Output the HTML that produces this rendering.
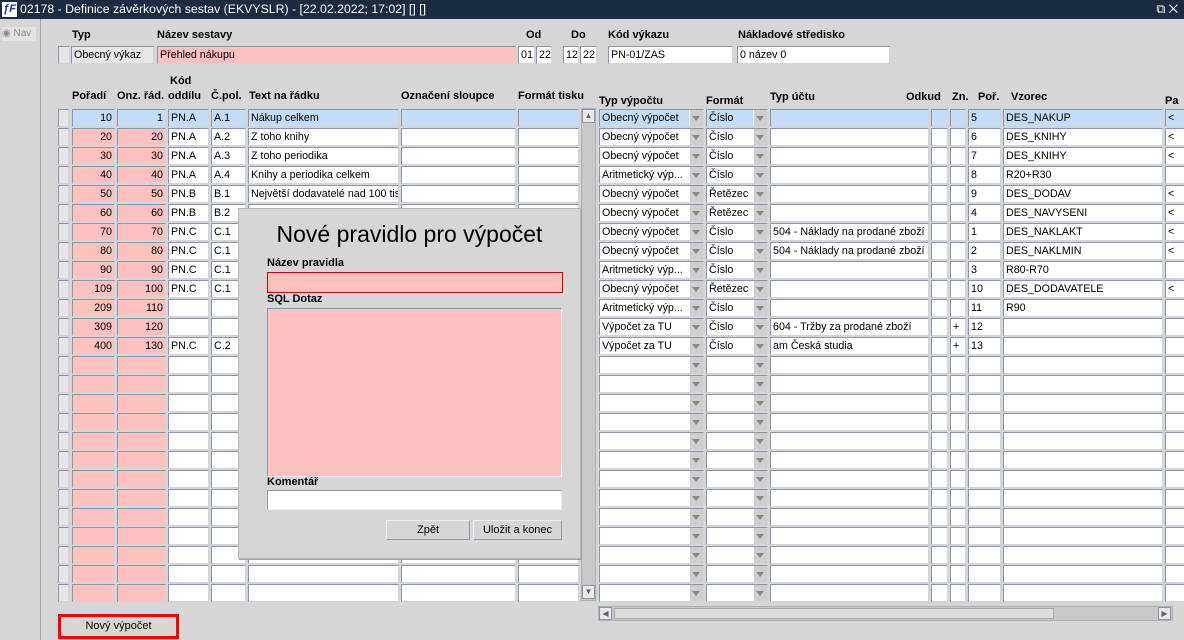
<!DOCTYPE html><html><head><meta charset="utf-8"><style>
*{box-sizing:border-box;margin:0;padding:0}
body{width:1184px;height:640px;background:#d6d6d6;font-family:"Liberation Sans",Arial,sans-serif;font-size:11px;color:#000;position:relative;overflow:hidden}
.t{position:absolute;left:0;top:0;width:1184px;height:19px;background:#1c2b44;color:#fff;font-size:12.3px;line-height:19px;padding-left:20px;white-space:nowrap}
.lg{position:absolute;left:2px;top:2px;width:15px;height:15px;background:#fff;color:#2030c0;font-weight:bold;font-style:italic;font-size:11px;line-height:15px;text-align:center}
.side{position:absolute;left:0;top:19px;width:41px;height:621px;border-right:1px solid #a8a8a8}
.a{position:absolute}
.h{position:absolute;font-weight:bold;font-size:11px;white-space:nowrap}
.c{position:absolute;height:18px;background:#fff;border:1px solid #8a96aa;border-right-color:#d0d4dc;border-bottom-color:#d0d4dc;line-height:17px;padding:0 2px;white-space:nowrap;overflow:hidden;font-size:10.7px}
.r{text-align:right}
.pk{background:#ffc0c0}
.bl{background:#c2ddf8}
.gy{background:#e6e6e6}
.dd::after{content:"";position:absolute;right:0;top:0;width:13px;height:16px;background:#cfcfcf;border-left:1px solid #fff}
.dd::before{content:"";position:absolute;right:3px;top:6px;border:4px solid transparent;border-top:5px solid #888;border-bottom:0;z-index:2}
.row{position:absolute;left:0;width:1184px;height:18px}
.m{left:58px;width:11px}.A{left:72px;width:43px}.B{left:117px;width:49px}.C{left:168px;width:41px}.D{left:211px;width:35px}.E{left:248px;width:151px}.F{left:401px;width:115px}.G{left:518px;width:61px}
.H{left:599px;width:105px}.I{left:706px;width:62px}.J{left:770px;width:159px}.K{left:931px;width:17px}.L{left:950px;width:16px}.N{left:968px;width:33px}.O{left:1003px;width:160px}.P{left:1165px;width:20px}
.dlg{position:absolute;left:238px;top:208px;width:343px;height:351px;background:#d6d6d6;border:1px solid #b8b8b8;box-shadow:1px 1px 0 #a0a0a0;z-index:5}
.btn{position:absolute;background:#d6d6d6;border:1px solid #8a96aa;border-top-color:#eee;border-left-color:#eee;text-align:center;line-height:18px;font-size:11px;white-space:nowrap}
</style></head><body>
<div class="t"><div class="lg">ƒF</div>02178 - Definice závěrkových sestav (EKVYSLR) - [22.02.2022; 17:02] [] []<span style="position:absolute;right:6px;top:0">⧉ ✕</span></div>
<div class="side"><div class="a" style="left:2px;top:8px;width:34px;height:14px;background:#e4e4e4;color:#8a8a8a;font-size:10px;line-height:14px;white-space:nowrap">◉ Nav</div></div>

<div class="h" style="left:72px;top:29px">Typ</div>
<div class="h" style="left:157px;top:29px">Název sestavy</div>
<div class="h" style="left:526px;top:29px">Od</div>
<div class="h" style="left:571px;top:29px">Do</div>
<div class="h" style="left:608px;top:29px">Kód výkazu</div>
<div class="h" style="left:738px;top:29px">Nákladové středisko</div>
<div class="c gy" style="left:58px;top:46px;width:12px"></div>
<div class="c gy" style="left:71px;top:46px;width:83px">Obecný výkaz</div>
<div class="c pk" style="left:157px;top:46px;width:359px">Přehled nákupu</div>
<div class="c" style="left:518px;top:46px;width:17px">01</div>
<div class="c" style="left:536px;top:46px;width:16px">22</div>
<div class="c" style="left:563px;top:46px;width:16px">12</div>
<div class="c" style="left:580px;top:46px;width:17px">22</div>
<div class="c" style="left:608px;top:46px;width:125px">PN-01/ZAS</div>
<div class="c" style="left:737px;top:46px;width:153px">0 název 0</div>

<div class="h" style="left:170px;top:75px">Kód</div>
<div class="h" style="left:72px;top:90px">Pořadí</div>
<div class="h" style="left:117px;top:90px">Onz. řád.</div>
<div class="h" style="left:168px;top:90px">oddílu</div>
<div class="h" style="left:211px;top:90px">Č.pol.</div>
<div class="h" style="left:249px;top:90px">Text na řádku</div>
<div class="h" style="left:401px;top:90px">Označení sloupce</div>
<div class="h" style="left:518px;top:90px">Formát tisku</div>
<div class="h" style="left:599px;top:95px">Typ výpočtu</div>
<div class="h" style="left:706px;top:95px">Formát</div>
<div class="h" style="left:770px;top:91px">Typ účtu</div>
<div class="h" style="left:906px;top:91px">Odkud</div>
<div class="h" style="left:952px;top:91px">Zn.</div>
<div class="h" style="left:978px;top:91px">Poř.</div>
<div class="h" style="left:1011px;top:91px">Vzorec</div>
<div class="h" style="left:1165px;top:95px">Pa</div>

<div class="a" style="left:581px;top:108px;width:15px;height:493px;background:#c8c8c8;border:1px solid #b0b0b0"></div>
<div class="a" style="left:582px;top:109px;width:13px;height:14px;background:#e8e8e8;border:1px solid #8a96aa;font-size:8px;text-align:center;line-height:12px;color:#666">▲</div>
<div class="a" style="left:582px;top:585px;width:13px;height:14px;background:#e8e8e8;border:1px solid #8a96aa;font-size:8px;text-align:center;line-height:12px;color:#666">▼</div>

<div id="rows">
<div class="row" style="top:109px"><div class="c m gy"></div><div class="c A r bl">10</div><div class="c B r bl">1</div><div class="c C bl">PN.A</div><div class="c D bl">A.1</div><div class="c E bl">Nákup celkem</div><div class="c F bl"></div><div class="c G bl"></div><div class="c H dd bl">Obecný výpočet</div><div class="c I dd bl">Číslo</div><div class="c J bl"></div><div class="c K bl"></div><div class="c L bl"></div><div class="c N bl">5</div><div class="c O bl">DES_NAKUP</div><div class="c P bl">&lt;</div></div>
<div class="row" style="top:128px"><div class="c m gy"></div><div class="c A r pk">20</div><div class="c B r pk">20</div><div class="c C">PN.A</div><div class="c D">A.2</div><div class="c E">Z toho knihy</div><div class="c F"></div><div class="c G"></div><div class="c H dd">Obecný výpočet</div><div class="c I dd">Číslo</div><div class="c J"></div><div class="c K"></div><div class="c L"></div><div class="c N">6</div><div class="c O">DES_KNIHY</div><div class="c P">&lt;</div></div>
<div class="row" style="top:147px"><div class="c m gy"></div><div class="c A r pk">30</div><div class="c B r pk">30</div><div class="c C">PN.A</div><div class="c D">A.3</div><div class="c E">Z toho periodika</div><div class="c F"></div><div class="c G"></div><div class="c H dd">Obecný výpočet</div><div class="c I dd">Číslo</div><div class="c J"></div><div class="c K"></div><div class="c L"></div><div class="c N">7</div><div class="c O">DES_KNIHY</div><div class="c P">&lt;</div></div>
<div class="row" style="top:166px"><div class="c m gy"></div><div class="c A r pk">40</div><div class="c B r pk">40</div><div class="c C">PN.A</div><div class="c D">A.4</div><div class="c E">Knihy a periodika celkem</div><div class="c F"></div><div class="c G"></div><div class="c H dd">Aritmetický výp...</div><div class="c I dd">Číslo</div><div class="c J"></div><div class="c K"></div><div class="c L"></div><div class="c N">8</div><div class="c O">R20+R30</div><div class="c P"></div></div>
<div class="row" style="top:185px"><div class="c m gy"></div><div class="c A r pk">50</div><div class="c B r pk">50</div><div class="c C">PN.B</div><div class="c D">B.1</div><div class="c E">Největší dodavatelé nad 100 tis</div><div class="c F"></div><div class="c G"></div><div class="c H dd">Obecný výpočet</div><div class="c I dd">Řetězec</div><div class="c J"></div><div class="c K"></div><div class="c L"></div><div class="c N">9</div><div class="c O">DES_DODAV</div><div class="c P">&lt;</div></div>
<div class="row" style="top:204px"><div class="c m gy"></div><div class="c A r pk">60</div><div class="c B r pk">60</div><div class="c C">PN.B</div><div class="c D">B.2</div><div class="c E"></div><div class="c F"></div><div class="c G"></div><div class="c H dd">Obecný výpočet</div><div class="c I dd">Řetězec</div><div class="c J"></div><div class="c K"></div><div class="c L"></div><div class="c N">4</div><div class="c O">DES_NAVYSENI</div><div class="c P">&lt;</div></div>
<div class="row" style="top:223px"><div class="c m gy"></div><div class="c A r pk">70</div><div class="c B r pk">70</div><div class="c C">PN.C</div><div class="c D">C.1</div><div class="c E"></div><div class="c F"></div><div class="c G"></div><div class="c H dd">Obecný výpočet</div><div class="c I dd">Číslo</div><div class="c J">504 - Náklady na prodané zboží</div><div class="c K"></div><div class="c L"></div><div class="c N">1</div><div class="c O">DES_NAKLAKT</div><div class="c P">&lt;</div></div>
<div class="row" style="top:242px"><div class="c m gy"></div><div class="c A r pk">80</div><div class="c B r pk">80</div><div class="c C">PN.C</div><div class="c D">C.1</div><div class="c E"></div><div class="c F"></div><div class="c G"></div><div class="c H dd">Obecný výpočet</div><div class="c I dd">Číslo</div><div class="c J">504 - Náklady na prodané zboží</div><div class="c K"></div><div class="c L"></div><div class="c N">2</div><div class="c O">DES_NAKLMIN</div><div class="c P">&lt;</div></div>
<div class="row" style="top:261px"><div class="c m gy"></div><div class="c A r pk">90</div><div class="c B r pk">90</div><div class="c C">PN.C</div><div class="c D">C.1</div><div class="c E"></div><div class="c F"></div><div class="c G"></div><div class="c H dd">Aritmetický výp...</div><div class="c I dd">Číslo</div><div class="c J"></div><div class="c K"></div><div class="c L"></div><div class="c N">3</div><div class="c O">R80-R70</div><div class="c P"></div></div>
<div class="row" style="top:280px"><div class="c m gy"></div><div class="c A r pk">109</div><div class="c B r pk">100</div><div class="c C">PN.C</div><div class="c D">C.1</div><div class="c E"></div><div class="c F"></div><div class="c G"></div><div class="c H dd">Obecný výpočet</div><div class="c I dd">Řetězec</div><div class="c J"></div><div class="c K"></div><div class="c L"></div><div class="c N">10</div><div class="c O">DES_DODAVATELE</div><div class="c P">&lt;</div></div>
<div class="row" style="top:299px"><div class="c m gy"></div><div class="c A r pk">209</div><div class="c B r pk">110</div><div class="c C"></div><div class="c D"></div><div class="c E"></div><div class="c F"></div><div class="c G"></div><div class="c H dd">Aritmetický výp...</div><div class="c I dd">Číslo</div><div class="c J"></div><div class="c K"></div><div class="c L"></div><div class="c N">11</div><div class="c O">R90</div><div class="c P"></div></div>
<div class="row" style="top:318px"><div class="c m gy"></div><div class="c A r pk">309</div><div class="c B r pk">120</div><div class="c C"></div><div class="c D"></div><div class="c E"></div><div class="c F"></div><div class="c G"></div><div class="c H dd">Výpočet za TU</div><div class="c I dd">Číslo</div><div class="c J">604 - Tržby za prodané zboží</div><div class="c K"></div><div class="c L">+</div><div class="c N">12</div><div class="c O"></div><div class="c P"></div></div>
<div class="row" style="top:337px"><div class="c m gy"></div><div class="c A r pk">400</div><div class="c B r pk">130</div><div class="c C">PN.C</div><div class="c D">C.2</div><div class="c E"></div><div class="c F"></div><div class="c G"></div><div class="c H dd">Výpočet za TU</div><div class="c I dd">Číslo</div><div class="c J">am Česká studia</div><div class="c K"></div><div class="c L">+</div><div class="c N">13</div><div class="c O"></div><div class="c P"></div></div>
</div>
<script>
var r=document.getElementById('rows');
for(var i=13;i<26;i++){var d=document.createElement('div');d.className='row';d.style.top=(109+19*i)+'px';
d.innerHTML='<div class="c m gy"></div><div class="c A pk"></div><div class="c B pk"></div><div class="c C"></div><div class="c D"></div><div class="c E"></div><div class="c F"></div><div class="c G"></div><div class="c H dd"></div><div class="c I dd"></div><div class="c J"></div><div class="c K"></div><div class="c L"></div><div class="c N"></div><div class="c O"></div><div class="c P"></div>';r.appendChild(d);}
</script>

<div class="a" style="left:598px;top:606px;width:575px;height:15px;background:#c8c8c8;border:1px solid #b0b0b0"></div>
<div class="a" style="left:599px;top:607px;width:13px;height:13px;background:#e8e8e8;border:1px solid #8a96aa;font-size:8px;line-height:11px;text-align:center;color:#666">◀</div>
<div class="a" style="left:1158px;top:607px;width:13px;height:13px;background:#e8e8e8;border:1px solid #8a96aa;font-size:8px;line-height:11px;text-align:center;color:#666">▶</div>
<div class="a" style="left:614px;top:608px;width:440px;height:11px;background:#dcdcdc;border:1px solid #aaa"></div>

<div class="a" style="left:58px;top:614px;width:121px;height:25px;border:3px solid #f00;text-align:center;line-height:19px">Nový výpočet</div>

<div class="dlg">
<div class="a" style="left:0;top:12px;width:341px;text-align:center;font-size:23px">Nové pravidlo pro výpočet</div>
<div class="h" style="left:28px;top:48px">Název pravidla</div>
<div class="a" style="left:28px;top:63px;width:296px;height:21px;background:#ffc0c0;border:1px solid #d00"></div>
<div class="h" style="left:28px;top:84px">SQL Dotaz</div>
<div class="a" style="left:28px;top:99px;width:295px;height:169px;background:#ffc0c0;border:1px solid #8a96aa;border-right-color:#eee;border-bottom-color:#eee"></div>
<div class="h" style="left:28px;top:267px">Komentář</div>
<div class="a" style="left:28px;top:281px;width:295px;height:20px;background:#fff;border:1px solid #8a96aa;border-right-color:#eee;border-bottom-color:#eee"></div>
<div class="btn" style="left:147px;top:311px;width:84px;height:20px">Zpět</div>
<div class="btn" style="left:234px;top:311px;width:89px;height:20px">Uložit a konec</div>
</div>
</body></html>
